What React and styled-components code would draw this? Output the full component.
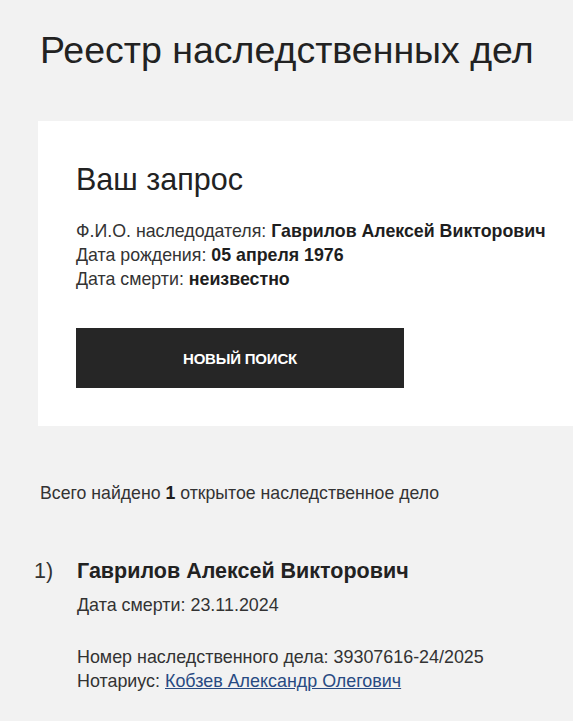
import React from "react";
import styled, { createGlobalStyle } from "styled-components";

const GlobalStyle = createGlobalStyle`
  html, body {
    margin: 0;
    padding: 0;
    background: #f2f2f2;
    overflow: hidden;
  }
  body {
    font-family: "Liberation Sans", Arial, sans-serif;
    color: #222222;
  }
`;

const Page = styled.div`
  width: 573px;
  min-height: 721px;
  padding-top: 29px;
  box-sizing: border-box;
`;

const Title = styled.h1`
  margin: 0 0 0 40px;
  font-size: 37.5px;
  font-weight: 400;
  line-height: 42px;
  white-space: nowrap;
`;

const Card = styled.section`
  margin: 50px 0 0 38px;
  padding: 40px 0 38px 38px;
  background: #ffffff;
`;

const CardTitle = styled.h2`
  margin: 0 0 22px;
  font-size: 30.5px;
  font-weight: 400;
  line-height: 36px;
`;

const InfoLine = styled.div`
  font-size: 17.8px;
  line-height: 24px;
  color: #333333;
  white-space: nowrap;

  b {
    color: #1e1e1e;
  }
`;

const Button = styled.button`
  display: block;
  margin-top: 37px;
  width: 328px;
  height: 60px;
  border: none;
  background: #262626;
  color: #ffffff;
  font-family: "Liberation Sans", Arial, sans-serif;
  font-size: 15px;
  font-weight: 700;
  letter-spacing: -0.2px;
  cursor: pointer;
`;

const Summary = styled.p`
  margin: 56px 0 0 40px;
  font-size: 17.7px;
  line-height: 22px;
  color: #333333;

  b {
    color: #1e1e1e;
  }
`;

const List = styled.ol`
  list-style: none;
  margin: 54px 0 0;
  padding: 0;
`;

const Item = styled.li`
  display: grid;
  grid-template-columns: 77px 1fr;
`;

const Index = styled.span`
  padding-left: 34px;
  font-size: 21.5px;
  line-height: 26px;
  color: #333333;
`;

const Name = styled.div`
  font-size: 21.5px;
  font-weight: 700;
  line-height: 26px;
  color: #222222;
  white-space: nowrap;
`;

const Field = styled.div`
  font-size: 17.9px;
  line-height: 24px;
  color: #333333;
  white-space: nowrap;
  margin-top: ${(p) => p.$gap || 0}px;
`;

const Link = styled.a`
  color: #284a82;
  text-decoration: underline;
`;

export default function App() {
  return (
    <>
      <GlobalStyle />
      <Page>
        <Title>Реестр наследственных дел</Title>
        <Card>
          <CardTitle>Ваш запрос</CardTitle>
          <InfoLine>
            Ф.И.О. наследодателя: <b>Гаврилов Алексей Викторович</b>
          </InfoLine>
          <InfoLine>
            Дата рождения: <b>05 апреля 1976</b>
          </InfoLine>
          <InfoLine>
            Дата смерти: <b>неизвестно</b>
          </InfoLine>
          <Button>НОВЫЙ ПОИСК</Button>
        </Card>
        <Summary>
          Всего найдено <b>1</b> открытое наследственное дело
        </Summary>
        <List>
          <Item>
            <Index>1)</Index>
            <div>
              <Name>Гаврилов Алексей Викторович</Name>
              <Field $gap={9}>Дата смерти: 23.11.2024</Field>
              <Field $gap={28}>Номер наследственного дела: 39307616-24/2025</Field>
              <Field>
                Нотариус: <Link href="#">Кобзев Александр Олегович</Link>
              </Field>
            </div>
          </Item>
        </List>
      </Page>
    </>
  );
}
